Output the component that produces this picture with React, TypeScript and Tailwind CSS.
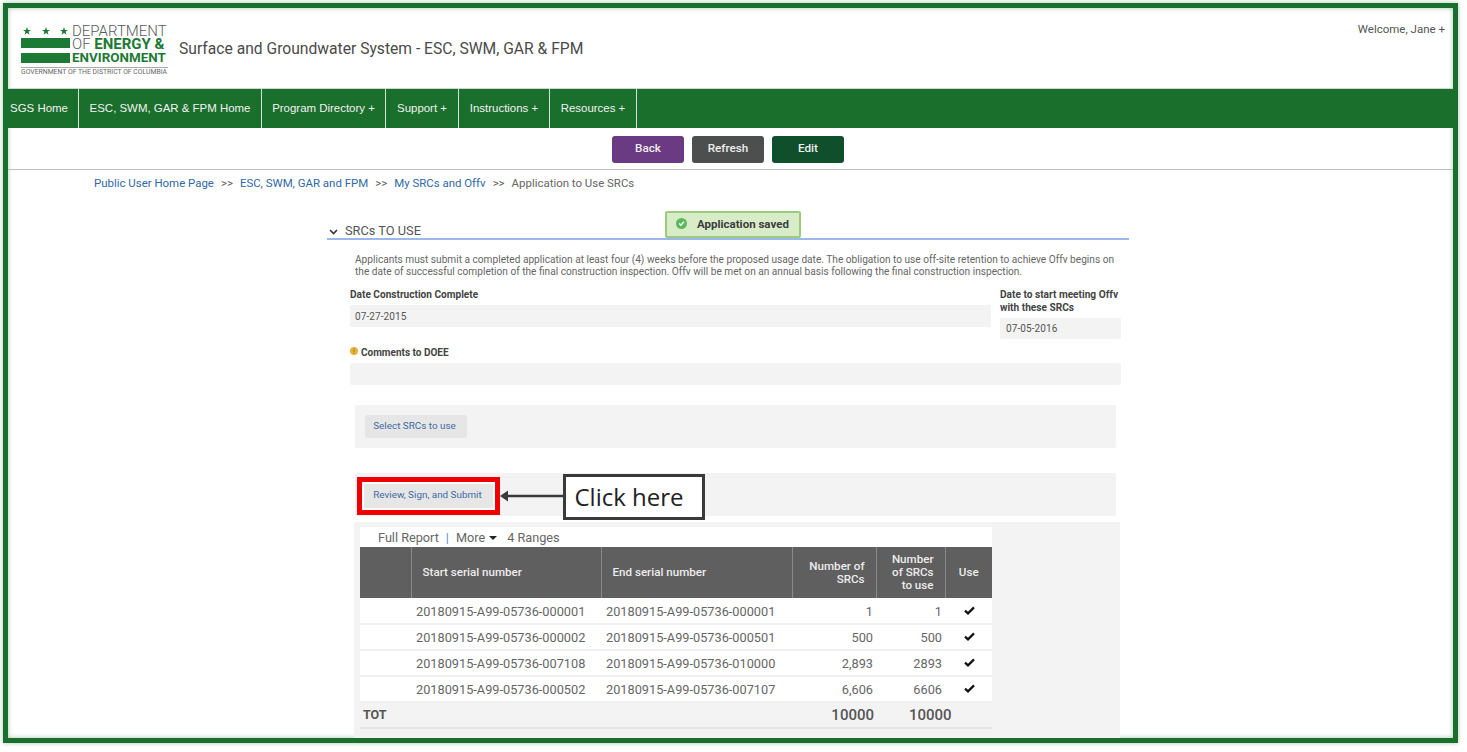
import React from "react";

const navItems = [
  ["SGS Home", "w-[71px] pr-[8px]"],
  ["ESC, SWM, GAR & FPM Home", "w-[183px]"],
  ["Program Directory +", "w-[124px]"],
  ["Support +", "w-[73px]"],
  ["Instructions +", "w-[91px]"],
  ["Resources +", "w-[87px]"],
];

const rows = [
  ["20180915-A99-05736-000001", "20180915-A99-05736-000001", "1", "1"],
  ["20180915-A99-05736-000002", "20180915-A99-05736-000501", "500", "500"],
  ["20180915-A99-05736-007108", "20180915-A99-05736-010000", "2,893", "2893"],
  ["20180915-A99-05736-000502", "20180915-A99-05736-007107", "6,606", "6606"],
];

function Check() {
  return (
    <svg width="11" height="9" viewBox="0 0 11 9" className="ml-[19px] -mt-[3px]">
      <path d="M1 4.6 L4 7.4 L10 1.4" fill="none" stroke="#111" strokeWidth="2.2" />
    </svg>
  );
}

function Logo() {
  return (
    <div className="w-[147px] h-[52px] flex flex-col">
      <div className="flex gap-[2px]">
        <div className="w-[49px] shrink-0 flex flex-col">
          <div className="flex justify-between px-[2px] h-[12px] items-center">
            {[0, 1, 2].map((i) => (
              <svg key={i} width="8" height="8" viewBox="0 0 10 10">
                <polygon points="5,0 6.3,3.6 10,3.7 7,6 8.1,9.7 5,7.5 1.9,9.7 3,6 0,3.7 3.7,3.6" fill="#1d7a35" />
              </svg>
            ))}
          </div>
          <div className="h-[10px] bg-[#1d7a35] mt-[1px]" />
          <div className="h-[10px] bg-[#1d7a35] mt-[5px]" />
        </div>
        <div className="flex flex-col text-[15px] leading-[13px] whitespace-nowrap font-light">
          <span className="text-[#58595b]">DEPARTMENT</span>
          <span className="text-[#58595b]">
            OF <b className="text-[#1d7a35] font-bold">ENERGY &amp;</b>
          </span>
          <b className="text-[#1d7a35] text-[13.4px] font-bold">ENVIRONMENT</b>
        </div>
      </div>
      <div className="mt-[3px] border-t border-[#aaa] pt-[1px] text-[6.85px] leading-[7px] text-[#666] whitespace-nowrap">
        GOVERNMENT OF THE DISTRICT OF COLUMBIA
      </div>
    </div>
  );
}

export default function App() {
  return (
    <div className="w-[1467px] h-[752px] bg-white pt-[3px] pl-[3px] overflow-hidden font-['Roboto',sans-serif]">
      <div className="relative w-[1455px] h-[740px] border-[5px] border-[#1a6f2c] bg-white overflow-hidden shadow-[0_0_5px_#a5c9ad,inset_0_0_5px_#a5c9ad]">
        {/* header */}
        <header className="h-[81px] flex items-start pl-[13px] pr-[8px] border-b border-[#cfd8d0]">
          <div className="mt-[17px]">
            <Logo />
          </div>
          <h1 className="ml-[11px] mt-[31px] text-[15.65px] leading-[20px] font-normal text-[#4a4a4a]">
            Surface and Groundwater System - ESC, SWM, GAR &amp; FPM
          </h1>
          <div className="ml-auto mt-[13px] text-[11.5px] leading-[16px] text-[#555]">Welcome, Jane +</div>
        </header>

        {/* nav */}
        <nav className="h-[39px] bg-[#1a6f2c] flex">
          {navItems.map(([label, w]) => (
            <div
              key={label}
              className={`${w} shrink-0 border-r border-[#d6e3d8] flex items-center justify-center text-[11.45px] text-[#f2f2f2] whitespace-nowrap font-['Liberation_Sans',sans-serif]`}
            >
              {label}
            </div>
          ))}
        </nav>

        {/* toolbar */}
        <div className="h-[42px] border-b border-[#bdbdbd] flex items-center justify-center gap-[8px] pt-[1px] pr-[5px]">
          <div className="w-[72px] h-[27px] rounded-[3px] bg-[#6a3a82] text-[#eee] text-[11.7px] font-medium flex items-center justify-center">Back</div>
          <div className="w-[72px] h-[27px] rounded-[3px] bg-[#4d4f4f] text-[#eee] text-[11.7px] font-medium flex items-center justify-center">Refresh</div>
          <div className="w-[72px] h-[27px] rounded-[3px] bg-[#0f4f2c] text-[#eee] text-[11.7px] font-medium flex items-center justify-center">Edit</div>
        </div>

        {/* breadcrumb */}
        <div className="pl-[86px] mt-[5px] h-[16px] flex items-center text-[11.45px] leading-[16px] text-[#666] whitespace-nowrap">
          <span className="text-[#2f6aa8]">Public User Home Page</span>
          <span className="mx-[7px] text-[#555]">&gt;&gt;</span>
          <span className="text-[#2f6aa8]">ESC, SWM, GAR and FPM</span>
          <span className="mx-[7px] text-[#555]">&gt;&gt;</span>
          <span className="text-[#2f6aa8]">My SRCs and Offv</span>
          <span className="mx-[7px] text-[#555]">&gt;&gt;</span>
          <span>Application to Use SRCs</span>
        </div>

        {/* section */}
        <section className="ml-[319px] w-[802px] mt-[32px]">
          <div className="h-[17px] border-b-2 border-[#9ab8ee] flex items-center">
            <svg width="9" height="6" viewBox="0 0 9 6" className="ml-[2px] mt-[2px]">
              <path d="M1 1 L4.5 4.5 L8 1" fill="none" stroke="#333" strokeWidth="1.6" />
            </svg>
            <span className="ml-[7px] text-[12.8px] leading-[15px] text-[#555]">SRCs TO USE</span>
          </div>

          <div className="pl-[28px] pr-[10px] mt-[14px] text-[10.15px] leading-[11.5px] text-[#666]">
            Applicants must submit a completed application at least four (4) weeks before the proposed usage date. The obligation to use off-site retention to achieve Offv begins on the date of successful completion of the final construction inspection. Offv will be met on an annual basis following the final construction inspection.
          </div>

          <div className="ml-[23px] w-[771px] mt-[12px] flex gap-[9px]">
            <div className="w-[641px]">
              <div className="h-[12px] text-[10.1px] leading-[12px] font-bold text-[#444]">Date Construction Complete</div>
              <div className="mt-[4px] h-[22px] bg-[#f3f3f3] rounded-[2px] pl-[5px] flex items-center text-[10px] text-[#555] tracking-[0.1px]">07-27-2015</div>
            </div>
            <div className="w-[121px] -mt-[1px]">
              <div className="text-[10.15px] leading-[13px] font-bold text-[#444] whitespace-nowrap">
                Date to start meeting Offv
                <br />
                with these SRCs
              </div>
              <div className="mt-[4px] h-[21px] bg-[#f3f3f3] rounded-[2px] pl-[6px] flex items-center text-[10px] text-[#555] tracking-[0.1px]">07-05-2016</div>
            </div>
          </div>

          <div className="ml-[23px] w-[771px] mt-[6px]">
            <div className="h-[14px] flex items-center gap-[3px] text-[10px] font-bold text-[#444]">
              <svg width="8" height="8" viewBox="0 0 8 8" className="mb-[2px]">
                <circle cx="4" cy="4" r="4" fill="#e8b23c" />
                <path d="M4 1.5 V5" stroke="#a97f1c" strokeWidth="1" />
                <circle cx="4" cy="6.2" r="0.6" fill="#a97f1c" />
              </svg>
              Comments to DOEE
            </div>
            <div className="mt-[4px] h-[22px] bg-[#f3f3f3] rounded-[2px]" />
          </div>

          <div className="ml-[28px] w-[761px] mt-[20px] h-[43px] bg-[#f3f3f3] rounded-[2px] pl-[10px] flex items-center">
            <div className="w-[102px] h-[23px] bg-[#e6e6e6] rounded-[2px] pr-[3px] flex items-center justify-center text-[9.9px] text-[#3f6aa5]">Select SRCs to use</div>
          </div>

          <div className="ml-[28px] w-[761px] mt-[25px] h-[43px] bg-[#f3f3f3] rounded-[2px]" />
        </section>

        {/* table block */}
        <div className="ml-[346px] w-[766px] h-[220px] mt-[6px] bg-[#f3f3f3] rounded-[2px] pl-[6px] pt-[5px]">
          <div className="w-[632px] bg-white">
            <div className="h-[20px] flex items-center pl-[18px] pt-[2px] text-[12.7px] text-[#666] whitespace-nowrap">
              <span>Full Report</span>
              <span className="mx-[7px] text-[#5b8fd0]">|</span>
              <span>More</span>
              <span className="ml-[4px] w-0 h-0 border-x-[4px] border-x-transparent border-t-[4px] border-t-[#222]" />
              <span className="ml-[10px]">4 Ranges</span>
            </div>
            <table className="w-[632px] table-fixed border-collapse text-[12.75px]">
              <colgroup>
                <col className="w-[51px]" />
                <col className="w-[190px]" />
                <col className="w-[191px]" />
                <col className="w-[84px]" />
                <col className="w-[69px]" />
                <col className="w-[47px]" />
              </colgroup>
              <thead>
                <tr className="h-[51px] bg-[#5f5f5f] text-[#ececec] text-[11.6px] leading-[13px]">
                  <th className="border-r border-[#8a8a8a]" />
                  <th className="border-r border-[#8a8a8a] text-left pl-[11px] font-medium">Start serial number</th>
                  <th className="border-r border-[#8a8a8a] text-left pl-[11px] font-medium">End serial number</th>
                  <th className="border-r border-[#8a8a8a] text-right pr-[11px] font-medium">Number of<br />SRCs</th>
                  <th className="border-r border-[#8a8a8a] text-right pr-[11px] font-medium">Number<br />of SRCs<br />to use</th>
                  <th className="text-center font-medium">Use</th>
                </tr>
              </thead>
              <tbody>
                {rows.map((r) => (
                  <tr key={r[0]} className="h-[26px] bg-white border-b-2 border-[#f0f0f0] text-[#666] [&>td]:pt-[2px]">
                    <td />
                    <td className="pl-[5px] whitespace-nowrap">{r[0]}</td>
                    <td className="pl-[5px] whitespace-nowrap">{r[1]}</td>
                    <td className="text-right pr-[3px]">{r[2]}</td>
                    <td className="text-right pr-[3px]">{r[3]}</td>
                    <td><Check /></td>
                  </tr>
                ))}
                <tr className="h-[26px] bg-[#f3f3f3] border-b-2 border-[#e4e4e4] text-[#555]">
                  <td className="pl-[3px] font-bold text-[12.5px]">TOT</td>
                  <td />
                  <td />
                  <td className="text-right pr-[2px] text-[15px] font-medium">10000</td>
                  <td colSpan={2} className="pl-[33px] text-[15px] font-medium">10000</td>
                </tr>
              </tbody>
            </table>
          </div>
        </div>

        {/* toast */}
        <div className="absolute left-[657px] top-[203px] w-[136px] h-[27px] bg-[#d9ecc8] border-2 border-[#9ccb7e] rounded-[2px] flex items-center pl-[9px]">
          <span className="w-[11px] h-[11px] rounded-full bg-[#5cb85c] flex items-center justify-center mb-[2px]">
            <svg width="7" height="7" viewBox="0 0 6 6"><path d="M1 3 L2.5 4.5 L5 1.5" fill="none" stroke="#fff" strokeWidth="1.2" /></svg>
          </span>
          <span className="ml-[10px] text-[11.5px] font-bold text-[#3d3d3d] whitespace-nowrap">Application saved</span>
        </div>

        {/* callout: red box */}
        <div className="absolute left-[349px] top-[469px] w-[143px] h-[38px] border-[5px] border-[#f00000] bg-white p-[2px]">
          <div className="w-full h-full bg-[#e6e6e6] flex items-center justify-center text-[9.9px] text-[#3f6aa5] whitespace-nowrap pb-[2px] pr-[2px]">Review, Sign, and Submit</div>
        </div>
        {/* arrow */}
        <svg className="absolute left-[491px] top-[482px]" width="64" height="12" viewBox="0 0 64 12">
          <path d="M1 6 L9 0.5 V4.7 H64 V7.3 H9 V11.5 Z" fill="#3a3a3a" />
        </svg>
        {/* callout: click here */}
        <div className="absolute left-[555px] top-[466px] w-[142px] h-[46px] border-[3px] border-[#3a3a3a] bg-white flex items-center justify-center pr-[10px] text-[24px] text-[#222] font-['Open_Sans',sans-serif]">
          Click here
        </div>
      </div>
    </div>
  );
}
